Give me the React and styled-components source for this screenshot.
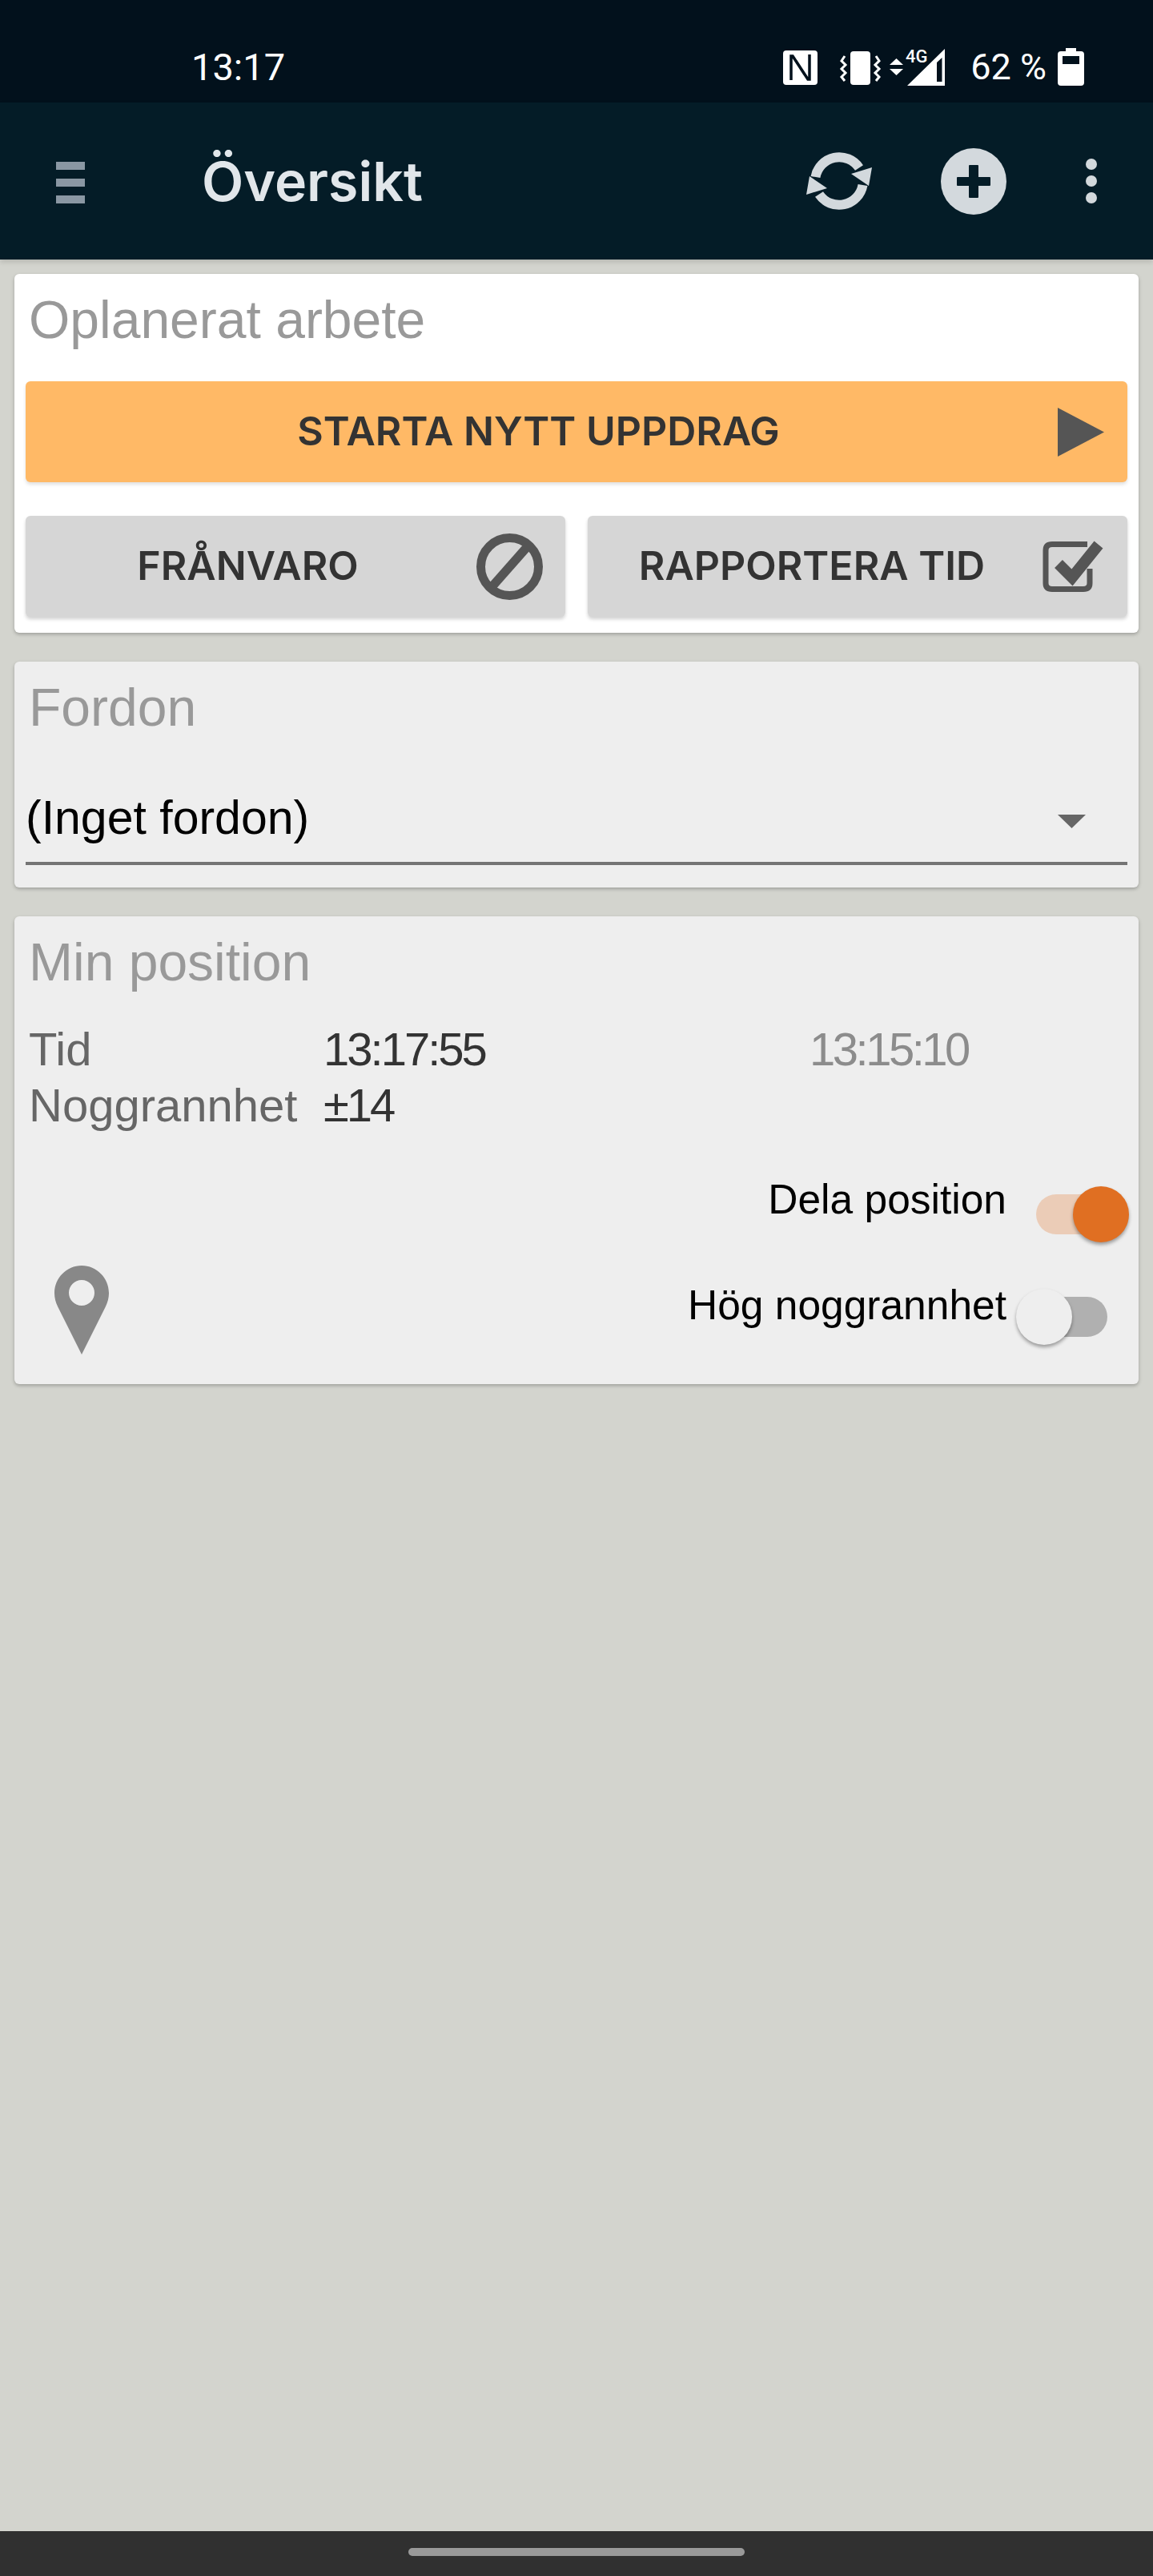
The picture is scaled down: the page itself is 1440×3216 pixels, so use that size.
import * as React from 'react'
import styled, {createGlobalStyle} from 'styled-components'

const GlobalStyle = createGlobalStyle`
  html, body {
    margin: 0;
    padding: 0;
    background: #d3d4ce;
  }
  * {
    box-sizing: border-box;
  }
`

function NfcVibrateSignal() {
    return (
        <StatusIcons viewBox="0 0 202 50">
            <rect x="0" y="4" width="43" height="43" rx="4" fill="#fff"/>
            <path d="M10 41V11h2l15 23M33 9v31h-2L16 17" fill="none" stroke="#02111c" strokeWidth="3.5"/>
            <rect x="84" y="5" width="25" height="42" rx="4" fill="#fff"/>
            <path d="M77 11l-4 6 5 5-5 5 5 5-5 5 4 5M116 11l4 6-5 5 5 5-5 5 5 5-4 5" fill="none" stroke="#fff" strokeWidth="3"/>
            <path d="M141.500 14l8.500 8h-17zM133 27h17l-8.500 8z" fill="#fff"/>
            <text x="153" y="19" fill="#fff" fontFamily="Roboto, sans-serif" fontWeight="500" fontSize="22">4G</text>
            <path d="M202 2v46h-47zM192 19v24h6.500V13z" fill="#fff" fillRule="evenodd"/>
        </StatusIcons>
    )
}

function Battery() {
    return (
        <BatteryIcon viewBox="0 0 33 47">
            <path d="M10 0h13v4h6a4 4 0 0 1 4 4v35a4 4 0 0 1-4 4H4a4 4 0 0 1-4-4V8a4 4 0 0 1 4-4h6zM6 10v10h21V10z" fill="#fff" fillRule="evenodd"/>
        </BatteryIcon>
    )
}

function Hamburger() {
    return (
        <MenuIcon viewBox="0 0 36 52">
            <path d="M0 0h36v10H0zM0 21h36v10H0zM0 42h36v10H0z" fill="#8a97a3"/>
        </MenuIcon>
    )
}

function SyncIcon() {
    return (
        <ActionIcon width="82" height="72" viewBox="0 0 82 72">
            <g fill="none" stroke="#d3d9dd" strokeWidth="12">
                <path d="M11.500 31A30 30 0 0 1 66 19.500"/>
                <path d="M70.500 41A30 30 0 0 1 16 52.500"/>
            </g>
            <path d="M82 19l-4 23-22-15zM0 53l4-23 22 15z" fill="#d3d9dd"/>
        </ActionIcon>
    )
}

function PlusIcon() {
    return (
        <PlusWrap width="82" height="83" viewBox="0 0 82 83">
            <ellipse cx="41" cy="41.500" rx="41" ry="41.500" fill="#d3d9dd"/>
            <path d="M35 22a1 1 0 0 1 1-1h10a1 1 0 0 1 1 1v14h14a1 1 0 0 1 1 1v9a1 1 0 0 1-1 1H47v14a1 1 0 0 1-1 1H36a1 1 0 0 1-1-1V47H21a1 1 0 0 1-1-1v-9a1 1 0 0 1 1-1h14z" fill="#041c27"/>
        </PlusWrap>
    )
}

function DotsIcon() {
    return (
        <ActionIcon width="14" height="56" viewBox="0 0 14 56">
            <circle cx="7" cy="7" r="7" fill="#d3d9dd"/>
            <circle cx="7" cy="28" r="7" fill="#d3d9dd"/>
            <circle cx="7" cy="49" r="7" fill="#d3d9dd"/>
        </ActionIcon>
    )
}

function PlayIcon() {
    return (
        <ButtonIcon width="58" height="61" viewBox="0 0 58 61">
            <path d="M0 0l58 30.500L0 61z" fill="#555"/>
        </ButtonIcon>
    )
}

function BanIcon() {
    return (
        <ButtonIcon width="83" height="83" viewBox="0 0 83 83">
            <circle cx="41.500" cy="41.500" r="36" fill="none" stroke="#555" strokeWidth="11"/>
            <path d="M64 16L19 67" stroke="#555" strokeWidth="11"/>
        </ButtonIcon>
    )
}

function CheckIcon() {
    return (
        <ButtonIcon width="78" height="66" viewBox="0 0 78 66">
            <path d="M56 5.500H12Q4 5.500 4 13v41q0 7.500 8 7.500h39q8 0 8-7.500V36" fill="none" stroke="#555" strokeWidth="7"/>
            <path d="M20 30l17 17 33-41" fill="none" stroke="#555" strokeWidth="14"/>
        </ButtonIcon>
    )
}

function PinIcon() {
    return (
        <Pin viewBox="0 0 68 111">
            <path d="M34 0C15.200 0 0 15.500 0 34.500c0 6 1.500 11 4 16.500l30 60 30-60c2.500-5.500 4-10.500 4-16.500C68 15.500 52.800 0 34 0zM34 18a16 16 0 1 1 0 32 16 16 0 0 1 0-32z" fill="#888" fillRule="evenodd"/>
        </Pin>
    )
}

function App() {
    return (
        <Page>
            <GlobalStyle/>
            <StatusBar>
                <StatusTime>13:17</StatusTime>
                <StatusRight>
                    <NfcVibrateSignal/>
                    <BatteryText>62 %</BatteryText>
                    <Battery/>
                </StatusRight>
            </StatusBar>

            <Toolbar>
                <Hamburger/>
                <ToolbarTitle>Översikt</ToolbarTitle>
                <ToolbarActions>
                    <SyncIcon/>
                    <PlusIcon/>
                    <DotsIcon/>
                </ToolbarActions>
            </Toolbar>

            <Content>
                <Card $white>
                    <CardTitle>Oplanerat arbete</CardTitle>
                    <StartButton>
                        <ButtonLabel>STARTA NYTT UPPDRAG</ButtonLabel>
                        <PlayIcon/>
                    </StartButton>
                    <ButtonRow>
                        <ActionButton>
                            <ButtonLabel>FRÅNVARO</ButtonLabel>
                            <BanIcon/>
                        </ActionButton>
                        <ActionButton>
                            <ButtonLabel>RAPPORTERA TID</ButtonLabel>
                            <CheckIcon/>
                        </ActionButton>
                    </ButtonRow>
                </Card>

                <Card>
                    <CardTitle>Fordon</CardTitle>
                    <SelectRow>
                        <SelectText>(Inget fordon)</SelectText>
                        <Caret viewBox="0 0 35 17">
                            <path d="M0 0h35L17.500 17z" fill="#666"/>
                        </Caret>
                    </SelectRow>
                </Card>

                <Card>
                    <CardTitle>Min position</CardTitle>
                    <InfoGrid>
                        <InfoLabel>Tid</InfoLabel>
                        <InfoValue>13:17:55</InfoValue>
                        <InfoValue $muted>13:15:10</InfoValue>
                        <InfoLabel>Noggrannhet</InfoLabel>
                        <InfoValue>±14</InfoValue>
                    </InfoGrid>
                    <BottomRow>
                        <PinIcon/>
                        <Toggles>
                            <ToggleRow>
                                <ToggleLabel $lift={13}>Dela position</ToggleLabel>
                                <Switch $on/>
                            </ToggleRow>
                            <ToggleRow>
                                <ToggleLabel $lift={9}>Hög noggrannhet</ToggleLabel>
                                <Switch/>
                            </ToggleRow>
                        </Toggles>
                    </BottomRow>
                </Card>
            </Content>

            <NavBar>
                <NavHandle/>
            </NavBar>
        </Page>
    )
}

export default App

const Page = styled.div`
  width: 1440px;
  min-height: 3216px;
  display: flex;
  flex-direction: column;
  background: #d3d4ce;
  font-family: 'Liberation Sans', Arial, sans-serif;
`

const StatusBar = styled.div`
  height: 128px;
  flex-shrink: 0;
  padding: 39px 86px 0 239px;
  display: flex;
  align-items: center;
  justify-content: space-between;
  background: #02111c;
  color: #fff;
  font-family: Roboto, sans-serif;
  font-size: 45px;
`

const StatusTime = styled.span`
  font-size: 47px;
  line-height: 50px;
`

const StatusRight = styled.div`
  display: flex;
  align-items: center;
`

const StatusIcons = styled.svg`
  width: 202px;
  height: 50px;
  display: block;
`

const BatteryText = styled.span`
  margin-left: 32px;
  line-height: 50px;
`

const BatteryIcon = styled.svg`
  width: 33px;
  height: 47px;
  margin-left: 14px;
  display: block;
`

const Toolbar = styled.div`
  position: relative;
  height: 196px;
  flex-shrink: 0;
  padding: 0 70px;
  display: flex;
  align-items: center;
  background: #041c27;
  box-shadow: 0 3px 6px rgba(0, 0, 0, 0.14);
`

const MenuIcon = styled.svg`
  width: 36px;
  height: 52px;
  margin-top: 4px;
  display: block;
`

const ToolbarTitle = styled.h1`
  margin: 0 0 0 146px;
  font-family: Inter, sans-serif;
  font-size: 68px;
  font-weight: 600;
  line-height: 80px;
  color: #e1e6ea;
`

const ToolbarActions = styled.div`
  margin-left: auto;
  display: flex;
  align-items: center;
  gap: 86px;
`

const ActionIcon = styled.svg`
  display: block;
`

const PlusWrap = styled.svg`
  display: block;
  margin-right: 13px;
`

const Content = styled.main`
  flex: 1;
  padding: 18px 18px 0;
  display: flex;
  flex-direction: column;
  gap: 36px;
`

const Card = styled.section`
  padding: 22px 14px 20px;
  border-radius: 6px;
  background: ${props => props.$white ? '#fff' : '#eee'};
  box-shadow: 0 2px 4px rgba(0, 0, 0, 0.25);
`

const CardTitle = styled.h2`
  margin: 0;
  padding-left: 4px;
  font-size: 66px;
  font-weight: 400;
  line-height: 70px;
  color: #999;
`

const StartButton = styled.div`
  height: 126px;
  margin-top: 42px;
  padding-right: 29px;
  display: flex;
  align-items: center;
  border-radius: 6px;
  background: #ffb966;
  box-shadow: 0 3px 4px rgba(0, 0, 0, 0.12);
  color: #333;
`

const ButtonRow = styled.div`
  margin-top: 42px;
  display: grid;
  grid-template-columns: 1fr 1fr;
  gap: 28px;
`

const ActionButton = styled.div`
  height: 126px;
  padding-right: 28px;
  display: flex;
  align-items: center;
  border-radius: 6px;
  background: #d6d6d6;
  box-shadow: 0 3px 4px rgba(0, 0, 0, 0.18);
  color: #333;
`

const ButtonLabel = styled.span`
  flex: 1;
  padding-bottom: 3px;
  text-align: center;
  font-family: Inter, sans-serif;
  font-size: 50px;
  font-weight: 600;
`

const ButtonIcon = styled.svg`
  flex-shrink: 0;
  margin-left: 8px;
  display: block;
`

const SelectRow = styled.div`
  margin: 68px 0 8px;
  padding-bottom: 20px;
  display: flex;
  align-items: center;
  justify-content: space-between;
  border-bottom: 4px solid #747474;
`

const SelectText = styled.span`
  font-size: 59px;
  line-height: 70px;
  color: #000;
`

const Caret = styled.svg`
  width: 35px;
  height: 17px;
  margin: 9px 52px 0 0;
  display: block;
`

const InfoGrid = styled.div`
  margin-top: 39px;
  padding-left: 4px;
  display: grid;
  grid-template-columns: 368px 607px auto;
  font-size: 58px;
  line-height: 70px;
`

const InfoLabel = styled.span`
  color: #666;
`

const InfoValue = styled.span`
  color: ${props => props.$muted ? '#8c8c8c' : '#333'};
  letter-spacing: ${props => props.$muted ? '-3.5px' : '-3px'};
`

const BottomRow = styled.div`
  margin-top: 66px;
  padding-bottom: 29px;
  display: flex;
  align-items: flex-end;
  justify-content: space-between;
`

const Pin = styled.svg`
  width: 68px;
  height: 111px;
  margin: 0 0 -12px 36px;
  display: block;
`

const Toggles = styled.div`
  margin-right: -2px;
  display: flex;
  flex-direction: column;
  gap: 58px;
`

const ToggleRow = styled.div`
  display: flex;
  justify-content: flex-end;
  align-items: flex-start;
  gap: 12px;
`

const ToggleLabel = styled.span`
  margin-top: -${props => props.$lift}px;
  font-size: 51.5px;
  line-height: 58px;
  color: #000;
`

const Switch = styled.div`
  position: relative;
  width: 141px;
  height: 70px;

  &::before {
    content: '';
    position: absolute;
    left: 25px;
    top: 10px;
    width: 89px;
    height: 50px;
    border-radius: 25px;
    background: ${props => props.$on ? '#ebccb7' : '#b0b0b0'};
  }

  &::after {
    content: '';
    position: absolute;
    top: 0;
    left: ${props => props.$on ? '71px' : '0'};
    width: 70px;
    height: 70px;
    border-radius: 50%;
    background: ${props => props.$on ? '#e06f22' : '#eee'};
    box-shadow: 0 3px 4px rgba(0, 0, 0, 0.35);
  }
`

const NavBar = styled.div`
  height: 56px;
  flex-shrink: 0;
  padding-top: 21px;
  display: flex;
  justify-content: center;
  background: #303030;
`

const NavHandle = styled.div`
  width: 420px;
  height: 10px;
  border-radius: 5px;
  background: #999;
`
